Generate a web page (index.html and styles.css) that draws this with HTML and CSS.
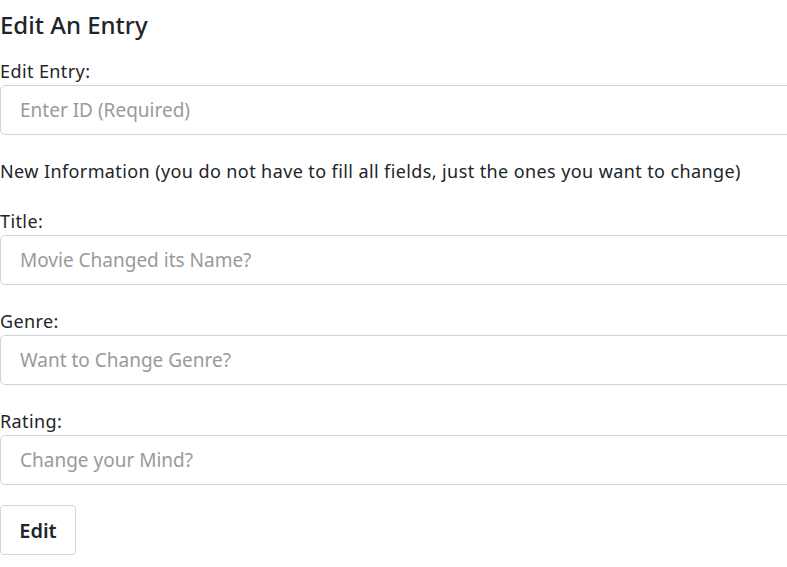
FILE: index.html
```html
<!DOCTYPE html>
<html>
<head>
<meta charset="utf-8">
<link rel="stylesheet" href="styles.css">
</head>
<body>
<main class="page">
  <h2 class="title">Edit An Entry</h2>
  <form class="form">
    <div class="group">
      <label class="label" for="id">Edit Entry:</label>
      <input class="field" id="id" type="text" placeholder="Enter ID (Required)">
    </div>
    <p class="note">New Information (you do not have to fill all fields, just the ones you want to change)</p>
    <div class="group">
      <label class="label" for="title">Title:</label>
      <input class="field" id="title" type="text" placeholder="Movie Changed its Name?">
    </div>
    <div class="group">
      <label class="label" for="genre">Genre:</label>
      <input class="field" id="genre" type="text" placeholder="Want to Change Genre?">
    </div>
    <div class="group">
      <label class="label" for="rating">Rating:</label>
      <input class="field" id="rating" type="text" placeholder="Change your Mind?">
    </div>
    <button class="btn" type="button">Edit</button>
  </form>
</main>
</body>
</html>
```

FILE: styles.css
```css
html {
  overflow: hidden;
}
body {
  margin: 0;
  font-family: "Noto Sans", "Open Sans", sans-serif;
  color: #212529;
  background: #fff;
}
.page {
  width: 800px;
}
.title {
  margin: 0;
  padding-top: 10px;
  font-size: 24px;
  font-weight: 500;
  line-height: 30px;
  height: 48px;
}
.form {
  display: flex;
  flex-direction: column;
}
.group {
  display: flex;
  flex-direction: column;
  margin-bottom: 23px;
}
.label {
  font-size: 18px;
  line-height: 27px;
  letter-spacing: 0.4px;
}
.note {
  margin: 0 0 23px;
  font-size: 18px;
  line-height: 27px;
  letter-spacing: 0.4px;
}
.field {
  box-sizing: border-box;
  height: 50px;
  width: 100%;
  margin: 0;
  padding: 9px 19px;
  border: 1px solid #ced4da;
  border-radius: 5px;
  font-family: inherit;
  font-size: 19px;
  color: #495057;
  background: #fff;
  outline: none;
}
.field::placeholder {
  color: #9a9a9a;
  opacity: 1;
}
.btn {
  align-self: flex-start;
  box-sizing: border-box;
  height: 50px;
  width: 76px;
  margin-top: -3px;
  padding: 0;
  border: 1px solid #d6d6d6;
  border-radius: 4px;
  background: #fff;
  font-family: inherit;
  font-size: 20px;
  font-weight: 600;
  color: #212529;
}
```
